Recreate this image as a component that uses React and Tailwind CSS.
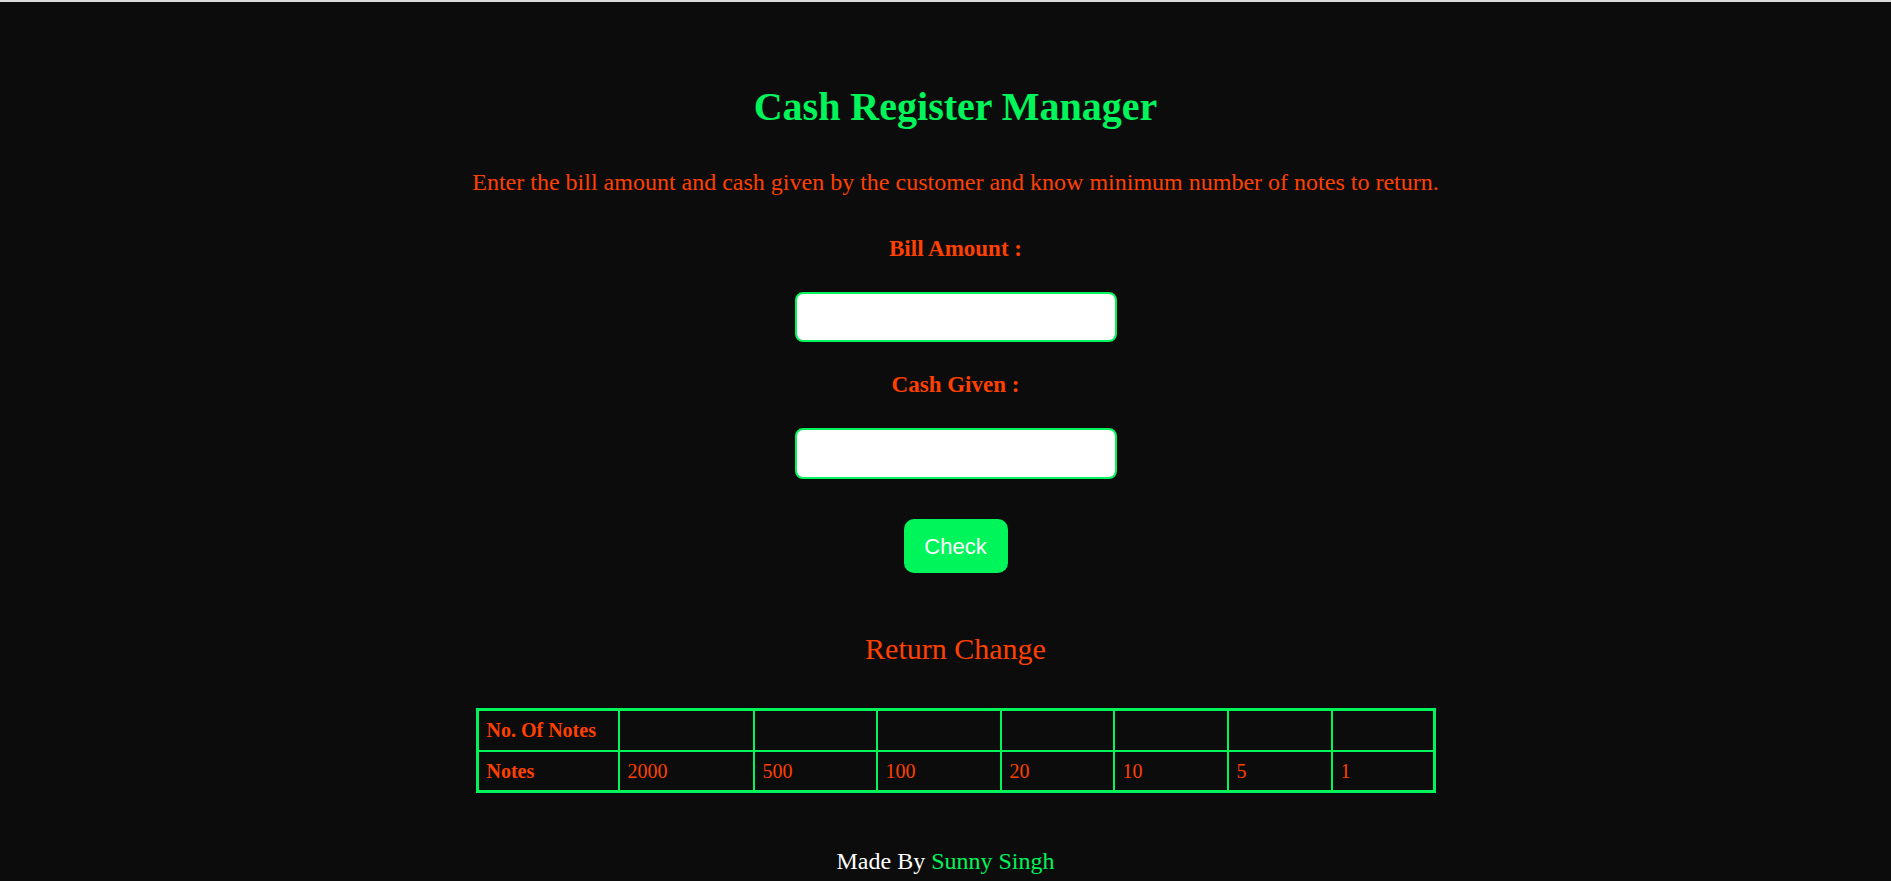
const notes = ["2000", "500", "100", "20", "10", "5", "1"];

const serif = "font-['Liberation_Serif','Times_New_Roman',serif]";

export default function App() {
  return (
    <div className={`min-h-[881px] bg-[#0c0c0c] ${serif} text-[#ff4000] border-t-2 border-[#dcdcdc]`}>
      <main className="flex flex-col items-center pt-[81px] pl-[20px]">
        <h1 className="text-[40px] leading-[48px] font-bold text-[#00f55a]">
          Cash Register Manager
        </h1>

        <p className="mt-[38px] text-[24px] leading-[26px]">
          Enter the bill amount and cash given by the customer and know minimum number of notes to return.
        </p>

        <label htmlFor="bill" className="mt-[41px] text-[23px] leading-[26px] font-bold">
          Bill Amount :
        </label>
        <input
          id="bill"
          type="number"
          className="mt-[30px] w-[322px] h-[50px] bg-white border-2 border-[#00f55a] rounded-[8px] px-3 text-black outline-none"
        />

        <label htmlFor="cash" className="mt-[30px] text-[23px] leading-[26px] font-bold">
          Cash Given :
        </label>
        <input
          id="cash"
          type="number"
          className="mt-[30px] w-[322px] h-[51px] bg-white border-2 border-[#00f55a] rounded-[8px] px-3 text-black outline-none"
        />

        <button className="mt-[40px] w-[104px] h-[54px] bg-[#00f55a] rounded-[10px] text-white text-[22px] font-['Liberation_Sans',Arial,sans-serif]">
          Check
        </button>

        <h2 className="mt-[58px] text-[30px] leading-[36px]">Return Change</h2>

        {/* change table */}
        <div className="mt-[41px] w-[960px] border-[3px] border-[#00f55a] grid grid-cols-[141px_135px_123px_124px_113px_114px_104px_100px] text-[20px] leading-[23px]">
          <div className="h-[41px] flex items-center px-2 font-bold border-r-2 border-b-2 border-[#00f55a]">No. Of Notes</div>
          {notes.map((n, i) => (
            <div
              key={"c" + n}
              className={`h-[41px] border-b-2 border-[#00f55a] ${i < notes.length - 1 ? "border-r-2" : ""}`}
            />
          ))}
          <div className="h-[38px] flex items-center px-2 font-bold border-r-2 border-[#00f55a]">Notes</div>
          {notes.map((n, i) => (
            <div
              key={n}
              className={`h-[38px] flex items-center px-2 border-[#00f55a] ${i < notes.length - 1 ? "border-r-2" : ""}`}
            >
              {n}
            </div>
          ))}
        </div>
      </main>

      <footer className="mt-[55px] pb-[20px] flex justify-center text-[24px] leading-[27px] text-white">
        <span>
          Made By <span className="text-[#00f55a]">Sunny Singh</span>
        </span>
      </footer>
    </div>
  );
}
